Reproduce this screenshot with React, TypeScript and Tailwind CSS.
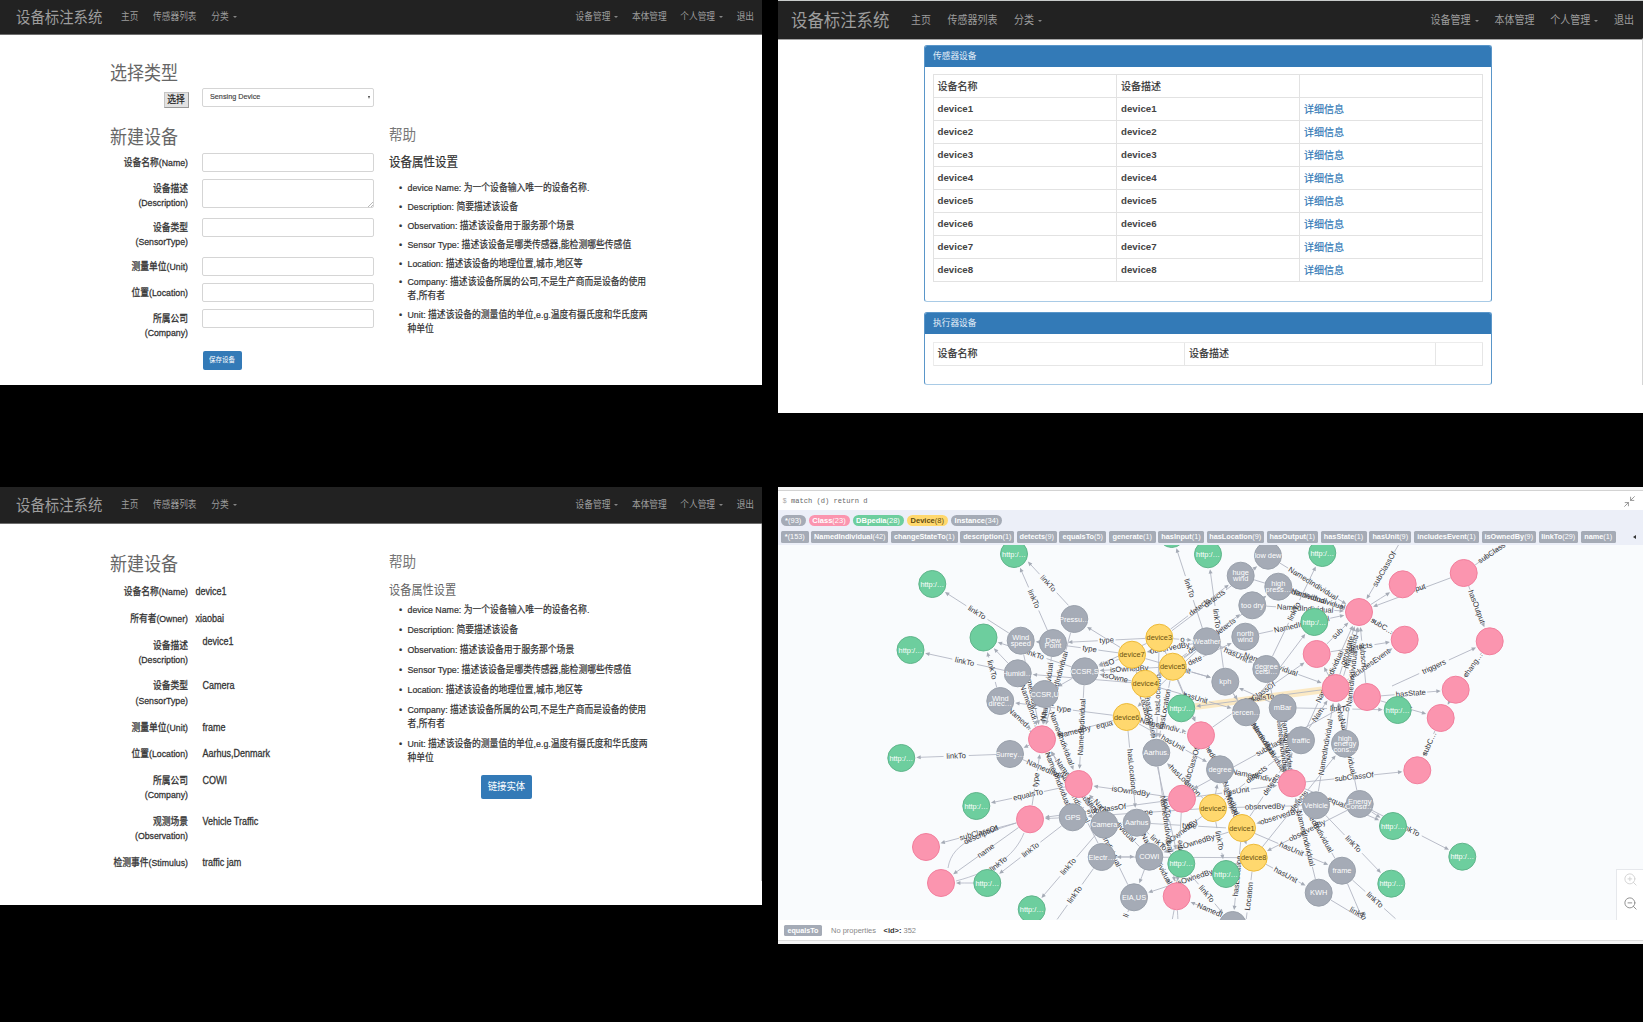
import React from "react";
import { Minimize2, ZoomIn, ZoomOut } from "lucide-react";

const FONT = "font-['Liberation_Sans','Noto_Sans_CJK_SC',sans-serif]";

function T({ children, className = "" }: { children: React.ReactNode; className?: string }) {
  return <span className={`inline-block whitespace-nowrap scale-y-[1.12] ${className}`}>{children}</span>;
}

function Caret() {
  return <span className="ml-[4px] inline-block h-0 w-0 border-x-[2px] border-t-[2px] border-x-transparent border-t-[#858585]" />;
}

type NavStyle = { bar: string; brand: string; left: string; right: string; text: string };

const smallNav = {
  brand: "text-[14.4px] w-[105px]",
  left: "gap-[14.7px]",
  right: "gap-[13.6px] pr-[8px]",
  text: "text-[8.7px]",
};
const largeNav = {
  brand: "text-[16.4px] w-[120px]",
  left: "gap-[16.5px]",
  right: "gap-[15.8px] pr-[9px]",
  text: "text-[10px]",
};

function Navbar({ bar, brand, left, right, text }: NavStyle) {
  return (
    <nav className={`flex shrink-0 items-center bg-[#222222] text-[#9d9d9d] ${bar}`}>
      <div className={`shrink-0 leading-none ${brand}`}>
        <T>设备标注系统</T>
      </div>
      <div className={`flex items-center leading-none ${left} ${text}`}>
        <T>主页</T>
        <T>传感器列表</T>
        <span className="flex items-center">
          <T>分类</T>
          <Caret />
        </span>
      </div>
      <div className={`ml-auto flex items-center leading-none ${right} ${text}`}>
        <span className="flex items-center">
          <T>设备管理</T>
          <Caret />
        </span>
        <T>本体管理</T>
        <span className="flex items-center">
          <T>个人管理</T>
          <Caret />
        </span>
        <T>退出</T>
      </div>
    </nav>
  );
}

const helpItems: string[][] = [
  ["device Name: 为一个设备输入唯一的设备名称."],
  ["Description: 简要描述该设备"],
  ["Observation: 描述该设备用于服务那个场景"],
  ["Sensor Type: 描述该设备是哪类传感器,能检测哪些传感值"],
  ["Location: 描述该设备的地理位置,城市,地区等"],
  ["Company: 描述该设备所属的公司,不是生产商而是设备的使用", "者,所有者"],
  ["Unit: 描述该设备的测量值的单位,e.g.温度有摄氏度和华氏度两", "种单位"],
];

function HelpList({ leading, gap }: { leading: string; gap: string }) {
  return (
    <ul className={`flex flex-col pl-[10px] text-[8.8px] text-[#333] [-webkit-text-stroke:0.2px_#333] ${leading} ${gap}`}>
      {helpItems.map((lines) => (
        <li key={lines[0]} className="flex">
          <span className="w-[8.5px] shrink-0 text-[9px]">•</span>
          <div className="flex flex-col items-start">
            {lines.map((l) => (
              <T key={l}>{l}</T>
            ))}
          </div>
        </li>
      ))}
    </ul>
  );
}

function Label({ lines, className = "" }: { lines: string[]; className?: string }) {
  return (
    <div className={`flex w-[188px] shrink-0 flex-col items-end text-[8.75px] text-[#333] [-webkit-text-stroke:0.25px_#333] ${className}`}>
      {lines.map((l) => (
        <T key={l}>{l}</T>
      ))}
    </div>
  );
}

const formRows = [
  { lines: ["设备名称(Name)"], row: "h-[26px]", field: "h-[18.5px]" },
  { lines: ["设备描述", "(Description)"], row: "h-[39px]", field: "h-[29px]", area: true },
  { lines: ["设备类型", "(SensorType)"], row: "h-[39px]", field: "h-[18.5px]" },
  { lines: ["测量单位(Unit)"], row: "h-[26px]", field: "h-[18.5px]" },
  { lines: ["位置(Location)"], row: "h-[26px]", field: "h-[18.5px]" },
  { lines: ["所属公司", "(Company)"], row: "h-[42px]", field: "h-[18.5px]" },
];

function CreateDevice() {
  return (
    <section className="flex h-[385px] flex-col bg-white">
      <Navbar bar="h-[35px] border-b border-[#6d6d6d] pl-[16px]" {...smallNav} />
      <div className="flex">
        <div className="w-[389px]">
          <h2 className="mt-[30px] h-[23px] pl-[110px] text-[17px] leading-[18px] text-[#666]">
            <T>选择类型</T>
          </h2>
          <div className="flex h-[39px] items-start">
            <div className="flex w-[188.5px] justify-end pt-[4px]">
              <button className="h-[16px] w-[25px] border border-[#c5c5c5] border-b-[#999] border-r-[#999] bg-[#e2e2e2] text-[8.8px] leading-[14px] text-[#222] [-webkit-text-stroke:0.2px_#222]">
                <T>选择</T>
              </button>
            </div>
            <div className="ml-[13.5px] flex h-[19px] w-[172px] items-center justify-between rounded-[2px] border border-[#d5d5d5] pl-[7px] pr-[3px] text-[7.25px] text-[#444] [-webkit-text-stroke:0.15px_#444]">
              <T className="scale-y-[1.2]">Sensing Device</T>
              <span className="h-0 w-0 border-x-[1.5px] border-t-[3px] border-x-transparent border-t-[#444]" />
            </div>
          </div>
          <h2 className="mt-[2px] h-[24px] pl-[110px] text-[17px] leading-[18px] text-[#666]">
            <T>新建设备</T>
          </h2>
          <div>
            {formRows.map((r) => (
              <div key={r.lines[0]} className={`flex items-start ${r.row}`}>
                <Label lines={r.lines} className="pt-[4.4px] leading-[13.6px]" />
                <div className={`relative ml-[14px] w-[172px] rounded-[2px] border border-[#d5d5d5] ${r.field}`}>
                  {r.area && (
                    <svg className="absolute bottom-0 right-0 h-[5px] w-[5px]" viewBox="0 0 5 5">
                      <path d="M0 5L5 0M3 5L5 3" stroke="#999" strokeWidth="0.7" />
                    </svg>
                  )}
                </div>
              </div>
            ))}
            <button className="ml-[202.5px] flex h-[19px] w-[39px] items-center justify-center rounded-[2px] bg-[#337ab7] text-[6.5px] leading-none text-white">
              <T>保存设备</T>
            </button>
          </div>
        </div>
        <div className="pt-[94px]">
          <h3 className="text-[13.6px] leading-[14px] text-[#777]">
            <T>帮助</T>
          </h3>
          <h4 className="mt-[12.5px] text-[11.5px] leading-[13px] text-[#333] [-webkit-text-stroke:0.2px_#333]">
            <T>设备属性设置</T>
          </h4>
          <div className="pt-[13.5px]">
            <HelpList leading="leading-[13.6px]" gap="gap-[5.3px]" />
          </div>
        </div>
      </div>
    </section>
  );
}

function DevicePanel({ title, className, children }: { title: string; className: string; children: React.ReactNode }) {
  return (
    <div className={`overflow-hidden rounded-[3px] border border-[#5a96c9] border-b-[#a9cbe6] bg-white ${className}`}>
      <div className="flex h-[21px] items-center bg-[#337ab7] pl-[8px] text-[8.7px] leading-none text-[#e6eff7]">
        <span>{title}</span>
      </div>
      <div className="pl-[7.5px] pt-[7.5px]">{children}</div>
    </div>
  );
}

const devices = [1, 2, 3, 4, 5, 6, 7, 8];

function DeviceTables() {
  return (
    <section className="flex h-[413px] flex-col border-t border-[#c9cccb] bg-white">
      <Navbar bar="h-[39px] border-b border-[#a5a5a5] rounded-br-[2px] pl-[13px] pt-[1px]" {...largeNav} />
      <div className="flex h-[345px] flex-col border-r border-[#d5d5d5] pl-[146px] pt-[4.5px]">
        <DevicePanel title="传感器设备" className="h-[257.5px] w-[568px]">
          <div className="grid w-[550px] grid-cols-[183.5px_183px_182.5px] border-l border-t border-[#e2e2e2] text-[10px] text-[#333]">
            {["设备名称", "设备描述", ""].map((h) => (
              <div
                key={h}
                className="flex h-[23px] items-center border-b border-r border-[#e2e2e2] pl-[4px] [-webkit-text-stroke:0.2px_#333]"
              >
                {h}
              </div>
            ))}
            {devices.map((d) => (
              <React.Fragment key={d}>
                <div className="flex h-[23px] items-center border-b border-r border-[#e2e2e2] pl-[4px] text-[9.7px] font-bold text-[#444]">
                  device{d}
                </div>
                <div className="flex h-[23px] items-center border-b border-r border-[#e2e2e2] pl-[4px] text-[9.7px] font-bold text-[#444]">
                  device{d}
                </div>
                <div className="flex h-[23px] items-center border-b border-r border-[#e2e2e2] pl-[4px] text-[#337ab7] [-webkit-text-stroke:0.2px_#337ab7]">
                  详细信息
                </div>
              </React.Fragment>
            ))}
          </div>
        </DevicePanel>
        <DevicePanel title="执行器设备" className="mt-[10.5px] h-[73px] w-[568px]">
          <div className="grid h-[24px] w-[550px] grid-cols-[251.5px_251px_46.5px] border-l border-t border-[#ececec] text-[10px] text-[#333] [-webkit-text-stroke:0.2px_#333]">
            <div className="flex items-center border-b border-r border-[#e6e6e6] pl-[4px]">设备名称</div>
            <div className="flex items-center border-b border-r border-[#e6e6e6] pl-[4px]">设备描述</div>
            <div className="border-b border-r border-[#e6e6e6]" />
          </div>
        </DevicePanel>
      </div>
    </section>
  );
}

const details = [
  { lines: ["设备名称(Name)"], value: "device1", row: "h-[27px]", pad: "pl-[7.5px]" },
  { lines: ["所有者(Owner)"], value: "xiaobai", row: "h-[27px]", pad: "pl-[7.5px]" },
  { lines: ["设备描述", "(Description)"], value: "device1", row: "h-[40.5px]", pad: "pl-[14.5px] -mt-[4px]" },
  { lines: ["设备类型", "(SensorType)"], value: "Camera", row: "h-[41.5px]", pad: "pl-[14.5px]" },
  { lines: ["测量单位(Unit)"], value: "frame", row: "h-[26.5px]", pad: "pl-[14.5px]" },
  { lines: ["位置(Location)"], value: "Aarhus,Denmark", row: "h-[26.5px]", pad: "pl-[14.5px]" },
  { lines: ["所属公司", "(Company)"], value: "COWI", row: "h-[41px]", pad: "pl-[14.5px]" },
  { lines: ["观测场景", "(Observation)"], value: "Vehicle Traffic", row: "h-[41px]", pad: "pl-[14.5px]" },
  { lines: ["检测事件(Stimulus)"], value: "traffic jam", row: "h-[20px]", pad: "pl-[14.5px]" },
];

function DeviceDetails() {
  return (
    <section className="flex h-[418px] flex-col bg-white">
      <Navbar bar="h-[37px] border-b border-[#6d6d6d] pl-[16px]" {...smallNav} />
      <div className="flex h-[357px] border-r border-[#c4c4c4]">
        <div className="w-[389px]">
          <h2 className="mt-[32px] pl-[110px] text-[17px] leading-[18px] text-[#666]">
            <T>新建设备</T>
          </h2>
          <div className="mt-[10.7px]">
            {details.map((d) => (
              <div key={d.lines[0]} className={`flex items-start leading-[14.5px] ${d.row}`}>
                <Label lines={d.lines} />
                <div className={`text-[9px] text-[#333] [-webkit-text-stroke:0.25px_#333] ${d.pad}`}>
                  <T>{d.value}</T>
                </div>
              </div>
            ))}
          </div>
        </div>
        <div className="pt-[31.5px]">
          <h3 className="text-[13.6px] leading-[14px] text-[#777]">
            <T>帮助</T>
          </h3>
          <h4 className="mt-[14.5px] text-[11.2px] leading-[13px] text-[#666]">
            <T>设备属性设置</T>
          </h4>
          <div className="pt-[6px]">
            <HelpList leading="leading-[14.4px]" gap="gap-[5.5px]" />
          </div>
          <button className="ml-[92px] mt-[9px] flex h-[24px] w-[51px] items-center justify-center rounded-[2px] bg-[#337ab7] text-[9.4px] leading-none text-white">
            <T>链接实体</T>
          </button>
        </div>
      </div>
    </section>
  );
}

type Kind = "g" | "p" | "y" | "a";
type GraphNode = [number, number, Kind, string?];

const nodes: Record<string, GraphNode> = {
  g1: [932.3, 584, "g", "http:/…"],
  g2: [1014, 554, "g", "http:/…"],
  g3: [910.5, 650, "g", "http:/…"],
  g4: [983.5, 637.5, "g"],
  g5: [1208, 554.3, "g", "http:/…"],
  g6: [1171.7, 534, "g"],
  g7: [1322.3, 553, "g", "http:/…"],
  g9: [1181.3, 708.3, "g", "http:/…"],
  g10: [1397.7, 710, "g", "http:/…"],
  g11: [901.3, 758, "g", "http:/…"],
  g12: [976.3, 806, "g", "http:/…"],
  g13: [987.3, 883, "g", "http:/…"],
  g14: [1031.7, 909.3, "g", "http:/…"],
  g15: [1181.3, 863.7, "g", "http:/…"],
  g16: [1226, 874, "g", "http:/…"],
  g17: [1393, 826, "g", "http:/…"],
  g18: [1391.3, 883.7, "g", "http:/…"],
  g19: [1462.3, 856.7, "g", "http:/…"],
  p1: [1359, 612, "p"],
  p2: [1402.7, 584.3, "p"],
  p3: [1463.7, 573, "p"],
  p4: [1404.7, 639.7, "p"],
  p5: [1489.7, 641.3, "p"],
  p6: [1316.7, 654, "p"],
  p7: [1335.7, 688, "p"],
  p8: [1367, 697, "p"],
  p9: [1455.7, 689.7, "p"],
  p10: [1440.7, 718, "p"],
  p11: [1417.3, 770.3, "p"],
  p12: [1292, 783.3, "p"],
  p13: [1201, 735.3, "p"],
  p14: [1042, 739.3, "p"],
  p15: [1078.7, 784, "p"],
  p16: [1030, 819.3, "p"],
  p17: [926, 847, "p"],
  p18: [941, 883, "p"],
  p19: [1182, 798.7, "p"],
  p20: [1176.7, 896.3, "p"],
  lowdew: [1268, 555.7, "a", "low dew"],
  huge: [1240.7, 575.7, "a", "huge|wind"],
  press: [1278.3, 586.7, "a", "high|press…"],
  toodry: [1252.3, 605.3, "a", "too dry"],
  north: [1245.3, 636.7, "a", "north|wind"],
  weather: [1206.7, 641.3, "a", "Weather"],
  celsi: [1266.3, 669, "a", "degree|celsi…"],
  g8: [1314.3, 622, "g", "http:/…"],
  kph: [1225.3, 681.7, "a", "kph"],
  percen: [1246, 712.3, "a", "percen…"],
  mbar: [1282.7, 707.7, "a", "mBar"],
  traffic: [1301, 740.3, "a", "traffic"],
  highe: [1345, 743.7, "a", "high|energy|cons…"],
  pressu: [1074.3, 619, "a", "Pressu…"],
  wspeed: [1020.7, 640.7, "a", "Wind|speed"],
  dew: [1053, 643, "a", "Dew|Point"],
  humidi: [1017.7, 673.3, "a", "Humidi…"],
  wdir: [1000.3, 701, "a", "Wind|direc…"],
  ccsru: [1044.7, 694, "a", "CCSR,U"],
  ccsrs: [1084.7, 671.3, "a", "CCSR,S"],
  surrey: [1010, 754, "a", "Surrey…"],
  aarhus: [1156.3, 752.7, "a", "Aarhus."],
  degree: [1220, 769.3, "a", "degree"],
  gps: [1072.7, 817.3, "a", "GPS"],
  camera: [1104.3, 824.7, "a", "Camera"],
  aarhus2: [1136.7, 822.7, "a", "Aarhus"],
  electr: [1101.7, 857, "a", "Electr…"],
  cowi: [1149.3, 856.7, "a", "COWI"],
  eia: [1134, 897.3, "a", "EIA,US"],
  vehicle: [1316, 805.3, "a", "Vehicle"],
  energy: [1359.7, 804, "a", "Energy|Consu…"],
  frame: [1342, 870.7, "a", "frame"],
  kwh: [1318.7, 892.7, "a", "KWH"],
  bottom: [1232.7, 925, "a"],
  d3: [1159.3, 637.7, "y", "device3"],
  d7: [1132, 654.7, "y", "device7"],
  d5: [1172.7, 666.7, "y", "device5"],
  d4: [1145.3, 683.7, "y", "device4"],
  d6: [1126.7, 717, "y", "device6"],
  d2: [1213, 808, "y", "device2"],
  d1: [1242, 828, "y", "device1"],
  d8: [1253.7, 857.7, "y", "device8"],
};

type End = string | [number, number];
// from, to, label, sideways offset
type Edge = [End, End, string?, number?];

const edges: Edge[] = [
  ["pressu", "g2", "linkTo", 5],
  ["dew", "g2", "linkTo"],
  ["wspeed", "g1", "linkTo"],
  ["humidi", "g3", "linkTo"],
  ["wdir", "g4", "linkTo"],
  ["humidi", "g4"],
  ["ccsrs", "g4", "linkTo"],
  ["dew", "wspeed"],
  ["d3", "dew", "type"],
  ["d7", [1061, 645], "type"],
  ["d7", "pressu"],
  ["d3", "ccsrs"],
  ["d7", "ccsrs", "isO"],
  ["d5", "ccsrs", "isOwnedBy"],
  ["d4", "humidi"],
  ["d4", "ccsrs", "isOwne"],
  ["d6", "wdir", "type"],
  ["d6", "p14"],
  ["ccsrs", "ccsru"],
  ["ccsrs", "p15", "NamedIndividual"],
  ["wspeed", "p14", "NamedIndiv"],
  ["humidi", "p14", "NamedIndi…"],
  ["dew", "p14", "NamedIndividual"],
  ["wdir", "p14", "Named…"],
  ["pressu", "p14", "NamedIndividual"],
  ["ccsru", "p14", "Na"],
  ["ccsru", "p15", "NamedIndividual"],
  ["surrey", "g11", "linkTo"],
  ["p14", "surrey"],
  ["surrey", "p15", "NamedIndi"],
  ["p15", "g12", "equalsTo"],
  ["p16", "p14", "type"],
  ["p16", "p17", "subClassOf"],
  ["p16", "p18", "name"],
  ["g13", "p18"],
  ["gps", "p16"],
  ["gps", "g13", "linkTo"],
  ["camera", "g14", "linkTo"],
  ["electr", [1056, 921], "linkTo"],
  ["gps", "p14", "NamedIndividual"],
  ["camera", "p14", "NamedIndividual"],
  ["camera", "p15", "Nam"],
  ["electr", "p14", "NamedIndividual", 3],
  ["eia", "p15", "NamedIndividual"],
  ["cowi", "p15", "NamedIndividual"],
  ["p19", "p15", "isOwnedBy"],
  ["p19", "p16", "subClassOf"],
  ["d2", "gps", "name"],
  ["aarhus2", [1228, 828], "type"],
  ["electr", "cowi"],
  ["d8", "electr"],
  ["d1", "cowi", "isOwnedBy"],
  ["d2", "cowi", "isOwnedBy"],
  ["d8", "eia", "isOwnedBy"],
  ["cowi", "eia"],
  ["eia", [1124, 921], "li"],
  ["aarhus2", "p20", "NamedIndividual"],
  ["aarhus2", "g15", "linkTo"],
  ["aarhus", "p20", "NamedIndividual"],
  ["aarhus", "g15", "linkTo", 2],
  ["p19", "p20", "type"],
  ["p20", [1172, 921]],
  ["p20", [1178, 921]],
  ["g15", "bottom", "linkTo"],
  [[1236, 921], "p20", "NamedI…"],
  ["d6", "aarhus2", "hasLocation"],
  ["d2", "aarhus", "hasLocation"],
  ["d3", "aarhus", "hasLocation"],
  ["d5", "aarhus", "hasLocation"],
  ["d4", "aarhus", "hasLocation"],
  ["d7", "aarhus", "hasLocation"],
  ["p13", "p19", "subClassOf"],
  ["degree", "p13", "NamedIndiv"],
  ["d6", "p13", "NamedIndiv…"],
  ["d6", "degree", "hasUnit"],
  ["d2", "degree"],
  ["degree", "p12", "NamedIndiv…"],
  ["p19", "p12", "hasUnit"],
  ["vehicle", "d2", "observedBy"],
  ["vehicle", "d1", "observedBy"],
  ["energy", "d8", "observedBy"],
  ["d1", "traffic", "detects"],
  ["d2", "traffic", "detects"],
  ["d8", "highe", "detects"],
  ["p8", "p19", "subClassOf", 3],
  ["p12", "p11", "subClassOf"],
  ["percen", "p12", "NamedIndividual"],
  ["kph", "p12", "NamedIndividual"],
  ["mbar", "p12", "NamedIndividual"],
  ["mbar", "p12", "NamedIndividual", 5],
  ["degree", "d1", "NamedInd"],
  ["degree", "d8", "Namedindiv", 2],
  ["vehicle", "p7", "NamedIndividual"],
  ["highe", "p7", "Na"],
  ["energy", "p7", "NamedIndividual"],
  ["traffic", "p7", "Nam"],
  ["traffic", "p1", "NamedIndividual"],
  ["mbar", "g10", "linkTo"],
  ["p8", "p10", "subC"],
  ["p8", "p9", "hasState"],
  [[1392, 686], "p5", "triggers"],
  ["p5", "p9", "chang…"],
  ["p10", "p11", "subC…"],
  ["p9", "p10"],
  ["p3", "p5", "hasOutput"],
  ["p3", "p1"],
  ["p1", "p2"],
  ["p3", [1522, 532]],
  [[1402, 539], "p1", "subClassOf"],
  ["p4", "p1", "subC…"],
  ["p6", "p1", "sub"],
  ["p6", "p4", "detects"],
  ["p7", "p4", "includesEvent"],
  ["p7", "p1", "generate"],
  ["p7", "p1", "NamedInd", 4],
  ["highe", "p1", "NamedIndividual"],
  ["p8", "p1", "subscri"],
  ["p7", "p6"],
  ["p13", "p6", "subClassOf"],
  ["lowdew", "p1", "NamedIndividual"],
  ["huge", "p1", "NamedIndividual"],
  ["press", "p1", "NamedIndividual"],
  ["toodry", "p1", "NamedIndividual"],
  ["north", "p1", "NamedIndividual"],
  ["percen", "g8"],
  ["celsi", "g7", "linkTo"],
  ["weather", "p7", "NamedIndividual"],
  ["weather", "celsi", "hasUnit"],
  ["kph", "g5", "linkTo"],
  ["weather", "g6", "linkTo"],
  ["d3", "huge", "detects"],
  ["d3", "lowdew", "detects", 2],
  ["d5", "press", "detects"],
  ["d4", "toodry", "detects"],
  ["d4", "north", "dete"],
  ["d3", "weather", "o"],
  ["weather", "d7", "observedBy"],
  ["weather", "d4", "type"],
  ["weather", "d6"],
  ["d7", "kph", "hasUnit"],
  ["d5", "kph"],
  ["d4", "percen", "hasUnit"],
  ["d5", "p13", "type"],
  ["d3", "p13"],
  ["kph", "percen"],
  ["mbar", "kph"],
  ["celsi", "p12"],
  ["kwh", "p12", "NamedIndividual"],
  ["frame", "p12", "NamedIndividual"],
  ["vehicle", "p12"],
  ["d1", "frame", "hasUnit"],
  ["d8", "kwh", "hasUnit"],
  ["vehicle", "g18", "linkTo"],
  ["energy", "g17"],
  ["p12", "g17", "equalsTo"],
  ["energy", "g19", "linkTo"],
  ["frame", [1397, 920], "linkTo"],
  ["frame", [1363, 920]],
  ["kwh", [1364, 920]],
  ["d2", "g16", "linkTo"],
  ["d1", "bottom", "hasLocation"],
  ["d8", [1246, 921], "Location"],
];

// Labels whose place is not the middle of their edge: x, y, angle, text
const freeLabels: [number, number, number, string][] = [
  [982, 837, -24, "description"],
  [1000, 866, -38, "linkTo"],
  [1075, 734, -14, "NamedBy"],
  [1105, 727, -13, "equa"],
  [1421, 590, -17, "put"],
  [1493, 555, -34, "subClass"],
  [1356, 915, 30, "linkT"],
  [1361, 917, 65, "lin"],
];

const fills: Record<Kind, [string, string, string]> = {
  g: ["#6dce9e", "#60b58b", "#ffffff"],
  p: ["#fb95af", "#f27f9d", "#ffffff"],
  y: ["#ffd86e", "#edba39", "#6b5310"],
  a: ["#a5abb6", "#9aa1ac", "#ffffff"],
};

const labelWidth = (s: string) => s.length * 3.7 + 3;

function EdgeLine({ edge }: { edge: Edge }) {
  const [from, to, label, shift = 0] = edge;
  const a = typeof from === "string" ? [nodes[from][0], nodes[from][1]] : from;
  const b = typeof to === "string" ? [nodes[to][0], nodes[to][1]] : to;
  const dx = b[0] - a[0];
  const dy = b[1] - a[1];
  const len = Math.hypot(dx, dy);
  const start = typeof from === "string" ? 14 : 0;
  const end = len - (typeof to === "string" ? 15 : 0);
  const deg = (Math.atan2(dy, dx) * 180) / Math.PI;
  const flip = Math.abs(deg) > 90;
  const mid = (start + end) / 2;
  const half = label ? Math.min(labelWidth(label) / 2, (end - start) / 2 - 2) : 0;
  return (
    <g transform={`translate(${a[0]} ${a[1]}) rotate(${deg}) translate(0 ${shift})`}>
      <path d={`M${start} 0H${mid - half}M${mid + half} 0H${end - 2}`} stroke="#b0b4c1" strokeWidth="0.8" fill="none" />
      {typeof to === "string" && <path d={`M${end} 0l-4.4 -2v4z`} fill="#a5abb6" />}
      {label && (
        <text
          transform={`translate(${mid} 0)${flip ? " rotate(180)" : ""}`}
          y="2.4"
          textAnchor="middle"
          fontSize="7.6"
          fill="#333338"
        >
          {label}
        </text>
      )}
    </g>
  );
}

function Graph() {
  return (
    <svg
      className="block h-[375px] w-[865px] shrink-0 bg-[#f9fbfd]"
      viewBox="778 545 865 375"
      fontFamily="'Liberation Sans', sans-serif"
    >
      <path d="M1195 706.6L1322 690" stroke="#fbe9c4" strokeWidth="7" />
      <EdgeLine edge={["p7", "g9", "equalsTo"]} />
      {edges.map((e, i) => (
        <EdgeLine key={i} edge={e} />
      ))}
      <g stroke="#b0b4c1" strokeWidth="0.8" fill="none">
        <path d="M1016 823C985 834 952 840 948 868" />
        <path d="M1024 833C1014 858 990 872 956 881" />
      </g>
      {freeLabels.map(([x, y, angle, text], i) => (
        <text
          key={i}
          transform={`translate(${x} ${y}) rotate(${angle})`}
          textAnchor="middle"
          fontSize="7.6"
          fill="#333338"
        >
          {text}
        </text>
      ))}
      {Object.entries(nodes).map(([id, [x, y, kind, label]]) => {
        const [fill, stroke, color] = fills[kind];
        const lines = label ? label.split("|") : [];
        return (
          <g key={id}>
            <circle cx={x} cy={y} r="13.5" fill={fill} stroke={stroke} strokeWidth="1" />
            {lines.map((l, i) => (
              <text
                key={i}
                x={x}
                y={y + 2.5 + (i - (lines.length - 1) / 2) * 5.6}
                textAnchor="middle"
                fontSize="7.4"
                fill={color}
              >
                {l}
              </text>
            ))}
          </g>
        );
      })}
    </svg>
  );
}

const labelPills = [
  { name: "*", count: "(93)", cls: "w-[24.5px] bg-[#a5abb6] text-white" },
  { name: "Class", count: "(23)", cls: "w-[41px] bg-[#fb95af] text-white" },
  { name: "DBpedia", count: "(28)", cls: "w-[51px] bg-[#6dce9e] text-white" },
  { name: "Device", count: "(8)", cls: "w-[41.5px] bg-[#ffd86e] text-[#604a0e]" },
  { name: "Instance", count: "(34)", cls: "w-[51px] bg-[#a5abb6] text-white" },
];

const relationPills = [
  ["*", "(153)", "w-[27.5px]"],
  ["NamedIndividual", "(42)", "w-[77px]"],
  ["changeStateTo", "(1)", "w-[66.5px]"],
  ["description", "(1)", "w-[54px]"],
  ["detects", "(9)", "w-[39.5px]"],
  ["equalsTo", "(5)", "w-[47px]"],
  ["generate", "(1)", "w-[46.5px]"],
  ["hasInput", "(1)", "w-[45.5px]"],
  ["hasLocation", "(9)", "w-[57.5px]"],
  ["hasOutput", "(1)", "w-[51px]"],
  ["hasState", "(1)", "w-[46px]"],
  ["hasUnit", "(9)", "w-[42px]"],
  ["includesEvent", "(1)", "w-[65px]"],
  ["isOwnedBy", "(9)", "w-[54px]"],
  ["linkTo", "(29)", "w-[39.5px]"],
  ["name", "(1)", "w-[35px]"],
];

function GraphBrowser() {
  return (
    <section className="relative flex h-[457px] flex-col overflow-hidden bg-[#f4f4f4]">
      <div className="mt-[3px] flex h-[20px] shrink-0 items-center justify-between border-t border-[#d3d3d3] bg-white pl-[4.5px] pr-[7px] pt-[1px]">
        <span className="whitespace-pre font-['Liberation_Mono',monospace] text-[7.08px] text-[#666]">
          <span className="text-[#aaa]">$</span> match (d) return d
        </span>
        <Minimize2 className="h-[13px] w-[13px] text-[#8a8a8a]" strokeWidth={1.6} />
      </div>
      <div className="flex h-[35px] shrink-0 flex-col gap-[5px] bg-[#eceff8] pl-[3px] pt-[5px]">
        <div className="flex gap-[3px]">
          {labelPills.map((p) => (
            <span
              key={p.name}
              className={`flex h-[11px] items-center justify-center rounded-full text-[7.5px] leading-none ${p.cls}`}
            >
              <b>{p.name}</b>
              {p.count}
            </span>
          ))}
        </div>
        <div className="flex items-center gap-[2.75px]">
          {relationPills.map(([name, count, w]) => (
            <span
              key={name}
              className={`flex h-[11.5px] shrink-0 items-center justify-center rounded-[1.5px] bg-[#a5abb6] text-[7.3px] leading-none text-white ${w}`}
            >
              <b>{name}</b>
              {count}
            </span>
          ))}
          <span className="ml-auto mr-[7px] h-0 w-0 border-y-[2px] border-r-[3px] border-y-transparent border-r-[#333]" />
        </div>
      </div>
      <Graph />
      <div className="flex h-[21px] shrink-0 items-center border-b border-[#dcdcdc] bg-white pl-[6px] pt-[1px] text-[7.5px] text-[#888]">
        <span className="flex h-[11px] w-[38px] items-center justify-center rounded-[1.5px] bg-[#a5abb6] text-[7.2px] font-bold leading-none text-white">
          equalsTo
        </span>
        <span className="ml-[9px] w-[52.5px]">No properties</span>
        <span>
          <b className="text-[#333]">&lt;id&gt;:</b> 352
        </span>
      </div>
      <div className="absolute bottom-[24px] right-0 flex h-[51px] w-[27px] flex-col items-center gap-[9px] border-l border-t border-[#e6e8ec] bg-white pt-[2px]">
        <ZoomIn className="h-[15px] w-[15px] text-[#d2d2d2]" strokeWidth={1.5} />
        <ZoomOut className="h-[15px] w-[15px] text-[#8c8c8c]" strokeWidth={1.5} />
      </div>
    </section>
  );
}

export default function App() {
  return (
    <main
      className={`grid h-[1022px] w-[1643px] grid-cols-[762px_865px] grid-rows-[487px_535px] items-start gap-x-[16px] overflow-hidden bg-black ${FONT}`}
    >
      <CreateDevice />
      <DeviceTables />
      <DeviceDetails />
      <GraphBrowser />
    </main>
  );
}
